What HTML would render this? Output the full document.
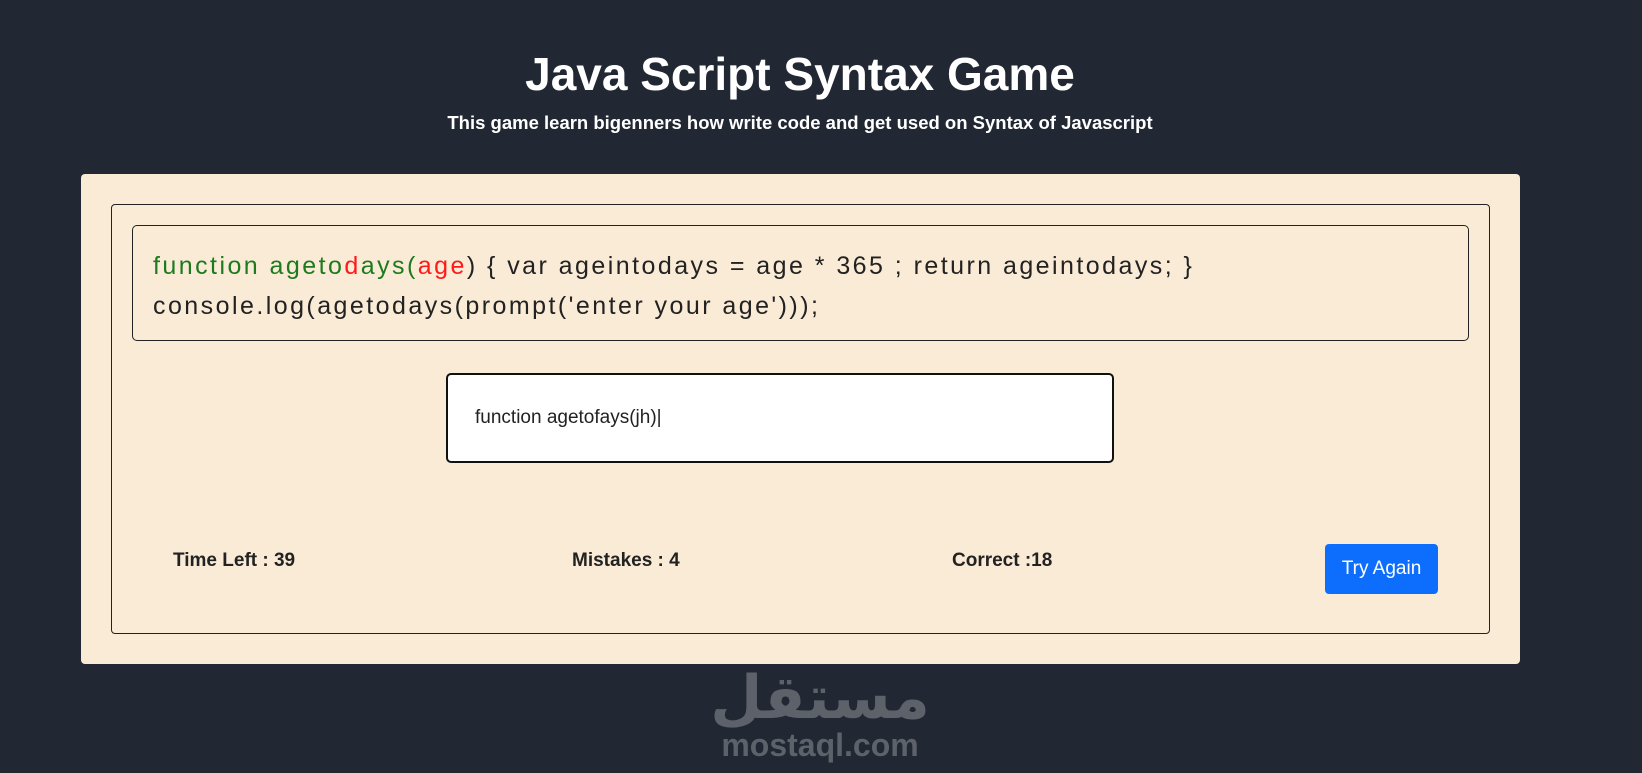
<!DOCTYPE html>
<html><head><meta charset="utf-8"><style>
html,body{margin:0;padding:0;}
body{width:1642px;height:773px;background:#212733;font-family:"Liberation Sans",sans-serif;position:relative;overflow:hidden;}
.abs{position:absolute;}
h1{position:absolute;left:0;width:1600px;text-align:center;top:44px;margin:0;font-size:46px;font-weight:bold;color:#fff;line-height:60px;}
.sub{left:0;width:1600px;text-align:center;top:112px;font-size:18.5px;font-weight:bold;color:#fff;}
.card{left:81px;top:174px;width:1439px;height:490px;background:#faebd7;border-radius:4px;}
.inner{left:111px;top:204px;width:1377px;height:428px;border:1px solid #222;border-radius:4px;}
.code{left:132px;top:225px;width:1335px;height:114px;border:1px solid #222;border-radius:5px;}
.code div{position:absolute;left:20px;font-size:25px;letter-spacing:2.45px;color:#222;white-space:nowrap;}
.g{color:#1e7a1e}.r{color:#ff1a1a}
.inp{left:446px;top:373px;width:664px;height:86px;background:#fff;border:2px solid #111;border-radius:5px;}
.inp span{position:absolute;left:27px;top:32px;font-size:19px;color:#222;}
.stat{top:550px;font-size:19px;font-weight:bold;color:#222;}
.btn{left:1325px;top:544px;width:113px;height:50px;background:#0d6efd;border-radius:4px;color:#fff;font-size:19px;text-align:center;line-height:50px;}
.wm{left:700px;top:666px;width:240px;text-align:center;color:#5d6169;font-weight:bold;}
</style></head><body>
<h1>Java Script Syntax Game</h1>
<div class="abs sub">This game learn bigenners how write code and get used on Syntax of Javascript</div>
<div class="abs card"></div>
<div class="abs inner"></div>
<div class="abs code">
<div style="top:26px"><span class="g">function ageto</span><span class="r">d</span><span class="g">ays(</span><span class="r">age</span>) { var ageintodays = age * 365 ; return ageintodays; }</div>
<div style="top:66px">console.log(agetodays(prompt('enter your age')));</div>
</div>
<div class="abs inp"><span>function agetofays(jh)|</span></div>
<div class="abs stat" style="left:173px">Time Left : 39</div>
<div class="abs stat" style="left:572px">Mistakes : 4</div>
<div class="abs stat" style="left:952px">Correct :18</div>
<div class="abs btn">Try Again</div>
<div class="abs wm"><div style="font-size:60px;line-height:64px;font-family:'DejaVu Sans',sans-serif">مستقل</div><div style="font-size:32px;line-height:30px">mostaql.com</div></div>
</body></html>
